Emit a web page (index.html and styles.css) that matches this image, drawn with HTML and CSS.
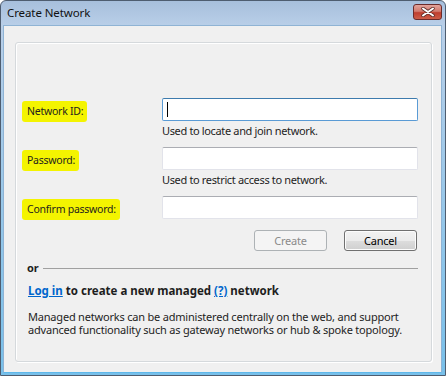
FILE: index.html
```html
<!DOCTYPE html>
<html lang="en">
<head>
<meta charset="UTF-8" />
<title>Create Network</title>
<link rel="stylesheet" href="styles.css">
</head>
<body>

<div class="window">
  <div class="titlebar">
    <span class="title">Create Network</span>
    <div class="close">
      <svg width="16" height="10" viewBox="0 0 16 10">
        <path d="M3 1.5 L13 8.5 M13 1.5 L3 8.5" stroke="#5a2a26" stroke-width="3.4" stroke-linecap="round" />
        <path d="M3 1.5 L13 8.5 M13 1.5 L3 8.5" stroke="#ffffff" stroke-width="2" stroke-linecap="round" />
      </svg>
    </div>
  </div>

  <div class="client">
    <div class="panel">

      <div class="row">
        <div class="label"><span class="mark">Network ID:</span></div>
        <div class="control">
          <div class="textbox focused"><span class="caret"></span></div>
          <div class="hint">Used to locate and join network.</div>
        </div>
      </div>

      <div class="row">
        <div class="label"><span class="mark">Password:</span></div>
        <div class="control">
          <div class="textbox"></div>
          <div class="hint">Used to restrict access to network.</div>
        </div>
      </div>

      <div class="row">
        <div class="label"><span class="mark">Confirm password:</span></div>
        <div class="control">
          <div class="textbox"></div>
        </div>
      </div>

      <div class="buttons">
        <button class="btn" disabled>Create</button>
        <button class="btn default">Cancel</button>
      </div>

      <div class="separator">
        <span>or</span>
        <div class="line"></div>
      </div>

      <div class="managed">
        <a href="#">Log in</a> to create a new managed <a href="#">(?)</a> network
      </div>

      <p class="note">
        Managed networks can be administered centrally on the web, and support
        advanced functionality such as gateway networks or hub &amp; spoke topology.
      </p>

    </div>
  </div>
</div>

</body>
</html>
```

FILE: styles.css
```css
body {
  margin: 0;
  padding: 0;
  background-color: #ffffff;
  font-family: "Noto Sans", "Open Sans", sans-serif;
  font-size: 11px;
  letter-spacing: -0.2px;
  color: #1e1e1e;
}
.window {
  width: 446px;
  height: 376px;
  box-sizing: border-box;
  display: flex;
  flex-direction: column;
  background: linear-gradient(to bottom, #a7bfdc 0px, #b9cfe8 25px, #78c0ea 100%);
  border: 1px solid #4e5d70;
  border-radius: 6px 6px 0 0;
  overflow: hidden;
}
.titlebar {
  height: 24px;
  display: flex;
  align-items: center;
  justify-content: space-between;
  padding: 0 3px 0 6px;
  flex-shrink: 0;
}
.title {
  font-size: 11.5px;
  letter-spacing: -0.1px;
  color: #111111;
  margin-top: -1px;
}
.close {
  width: 29px;
  height: 16px;
  margin-top: -2px;
  box-sizing: border-box;
  border: 1px solid #6b2b2b;
  border-radius: 3px;
  background: linear-gradient(to bottom, #e3a49c 0%, #d27a6e 45%, #bf3e2f 55%, #cd5d48 100%);
  display: flex;
  align-items: center;
  justify-content: center;
}
.client {
  flex: 1;
  margin: 0 3px 2px 2px;
  background-color: #f0f0f0;
  border: 1px solid #8fb3d4;
  border-bottom-color: #5fb8ea;
  padding: 16px 9px 10px 11px;
  display: flex;
}
.panel {
  flex: 1;
  border: 1px solid #d5d9dc;
  box-shadow: 1px 1px 0 #ffffff, inset 1px 1px 0 #ffffff;
  border-radius: 3px;
  padding: 55px 13px 0 6px;
}
.row {
  display: flex;
  margin-bottom: 10px;
}
.label {
  width: 140px;
  flex-shrink: 0;
}
.mark {
  display: inline-block;
  margin-top: 3px;
  padding: 3px 4px 3px 5px;
  line-height: 15px;
  font-size: 10.5px;
  letter-spacing: -0.25px;
  background-color: #f4f400;
  border-radius: 3px;
}
.control {
  flex: 1;
}
.textbox {
  height: 23px;
  box-sizing: border-box;
  background-color: #ffffff;
  border: 1px solid #e2e3ea;
  border-top-color: #abadb3;
  border-radius: 2px;
  padding: 3px 4px;
}
.textbox.focused {
  border-color: #5a9bd5;
  border-top-color: #3d7bad;
}
.caret {
  display: block;
  width: 1px;
  height: 15px;
  background-color: #000000;
}
.hint {
  margin-top: 3px;
  line-height: 13px;
  letter-spacing: -0.35px;
}
.buttons {
  display: flex;
  justify-content: flex-end;
  gap: 17px;
  margin-top: 3px;
  padding-right: 1px;
}
.btn {
  width: 73px;
  height: 21px;
  font-family: inherit;
  font-size: 11px;
  letter-spacing: -0.2px;
  color: #000000;
  border: 1px solid #707070;
  border-radius: 3px;
  background: linear-gradient(to bottom, #f2f2f2 0%, #ebebeb 50%, #dddddd 51%, #cfcfcf 100%);
  box-shadow: inset 0 0 0 1px #fcfcfc;
  padding: 0;
}
.btn:disabled {
  color: #8a8a8a;
  border-color: #adb2b5;
  background: #f4f4f4;
  box-shadow: none;
}
.separator {
  display: flex;
  align-items: center;
  gap: 5px;
  margin-top: 9px;
  padding-left: 5px;
  font-weight: bold;
}
.separator .line {
  flex: 1;
  height: 1px;
  margin-top: 1px;
  background-color: #a0a0a0;
}
.managed {
  margin-top: 8px;
  padding-left: 6px;
  font-weight: bold;
  font-size: 11.5px;
  letter-spacing: 0;
}
.managed a {
  color: #0066cc;
  text-decoration: underline;
}
.note {
  margin: 12px 0 0 0;
  padding-left: 6px;
  line-height: 13px;
}
```
